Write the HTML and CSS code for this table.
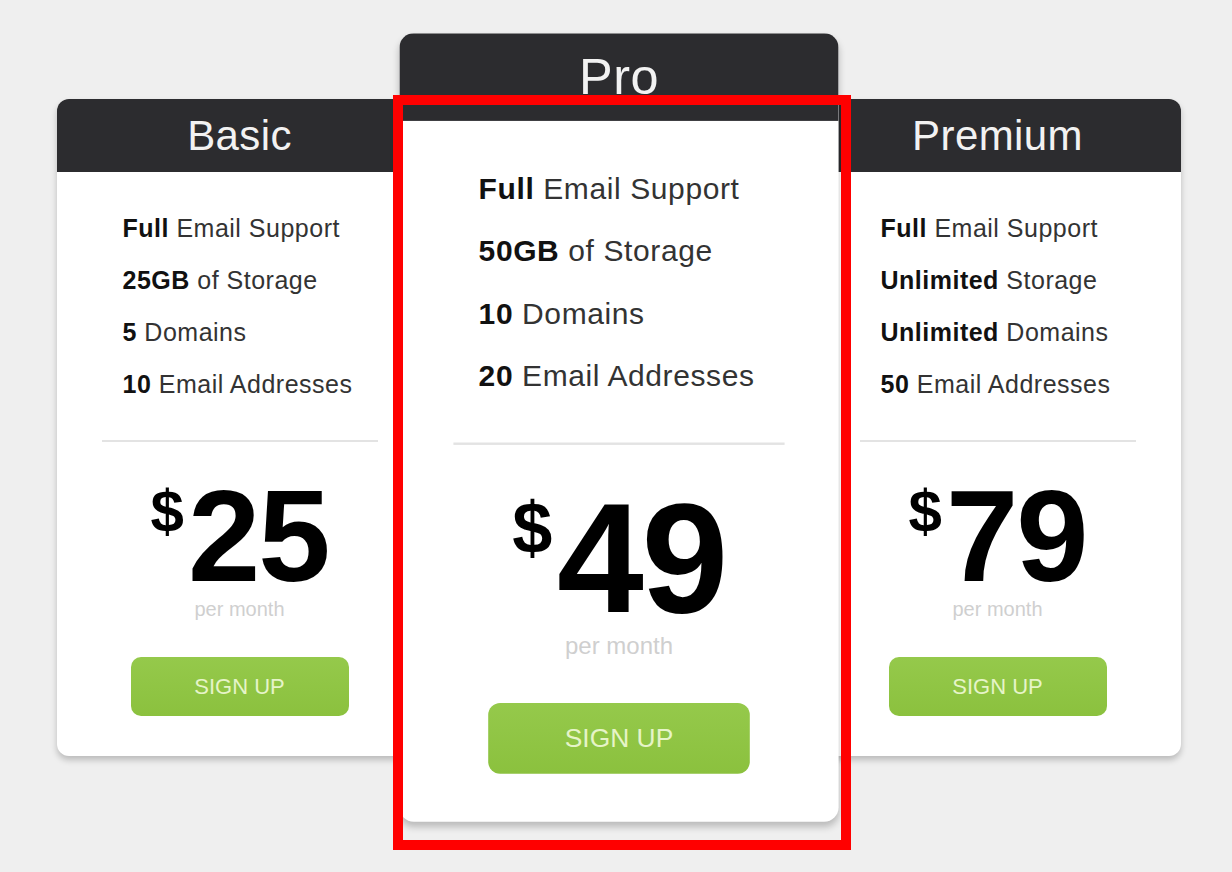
FILE: index.html
```html
<!DOCTYPE html>
<html lang="en">
<head>
    <meta charset="UTF-8">
    <meta name="viewport" content="width=device-width, initial-scale=1.0">
    <title>Pricing Table</title>
    <link rel="stylesheet" href="styles.css">
</head>
<body>
    <div class="pricing">
        <div class="plan">
            <div class="plan-head">Basic</div>
            <ul class="features">
                <li><b>Full</b> Email Support</li>
                <li><b>25GB</b> of Storage</li>
                <li><b>5</b> Domains</li>
                <li><b>10</b> Email Addresses</li>
            </ul>
            <div class="rule"></div>
            <div class="price"><span class="currency">$</span>25</div>
            <div class="period">per month</div>
            <a class="signup" href="#">SIGN UP</a>
        </div>

        <div class="plan plan-pro">
            <div class="plan-head">Pro</div>
            <ul class="features">
                <li><b>Full</b> Email Support</li>
                <li><b>50GB</b> of Storage</li>
                <li><b>10</b> Domains</li>
                <li><b>20</b> Email Addresses</li>
            </ul>
            <div class="rule"></div>
            <div class="price"><span class="currency">$</span>49</div>
            <div class="period">per month</div>
            <a class="signup" href="#">SIGN UP</a>
        </div>

        <div class="plan">
            <div class="plan-head">Premium</div>
            <ul class="features">
                <li><b>Full</b> Email Support</li>
                <li><b>Unlimited</b> Storage</li>
                <li><b>Unlimited</b> Domains</li>
                <li><b>50</b> Email Addresses</li>
            </ul>
            <div class="rule"></div>
            <div class="price"><span class="currency">$</span>79</div>
            <div class="period">per month</div>
            <a class="signup" href="#">SIGN UP</a>
        </div>
    </div>

    <!-- annotation box around the featured plan -->
    <div class="highlight"></div>
</body>
</html>
```

FILE: styles.css
```css
body {
    font-family: 'Liberation Sans', Arial, sans-serif;
    background: #efefef;
    margin: 0;
    height: 100vh;
    overflow: hidden;
    position: relative;
}

.pricing {
    display: flex;
    justify-content: center;
    align-items: flex-start;
    gap: 13px;
    padding: 99px 0 0 5px;
}

.plan {
    width: 366px;
    background-color: #fff;
    border-radius: 12px;
    overflow: hidden;
    box-shadow: 0 4px 6px rgba(0, 0, 0, 0.22);
    padding-bottom: 40px;
}

.plan-pro {
    position: relative;
    z-index: 1;
    transform: scale(1.2);
}

.plan-head {
    height: 73px;
    line-height: 73px;
    background-color: #2c2c2f;
    color: #f2f2f2;
    font-size: 42px;
    letter-spacing: 0.4px;
    text-align: center;
}

.features {
    list-style: none;
    margin: 30px 0 0;
    padding: 0 0 0 66px;
    font-size: 25px;
    line-height: 52px;
    letter-spacing: 0.5px;
    color: #333;
}

.features b {
    color: #111;
}

.rule {
    height: 2px;
    margin: 30px 45px 0;
    background-color: #e3e3e3;
}

.price {
    margin-top: 44px;
    font-size: 130px;
    line-height: 100px;
    font-weight: 700;
    color: #000;
    text-align: center;
    letter-spacing: -2px;
}

.currency {
    display: inline-block;
    vertical-align: top;
    font-size: 60px;
    line-height: 52px;
    margin-right: 4px;
    letter-spacing: 0;
}

.period {
    margin-top: 13px;
    font-size: 20px;
    line-height: 20px;
    color: #cfcfcf;
    text-align: center;
}

.signup {
    display: block;
    width: 218px;
    height: 59px;
    margin: 38px auto 0;
    border-radius: 10px;
    background: linear-gradient(#95c94b, #8bc13e);
    color: #e6f4c8;
    font-size: 22px;
    line-height: 59px;
    text-align: center;
    text-decoration: none;
}

.highlight {
    position: absolute;
    left: 393px;
    top: 95px;
    width: 458px;
    height: 755px;
    border: 10px solid #f00;
    box-sizing: border-box;
    z-index: 2;
}
```
